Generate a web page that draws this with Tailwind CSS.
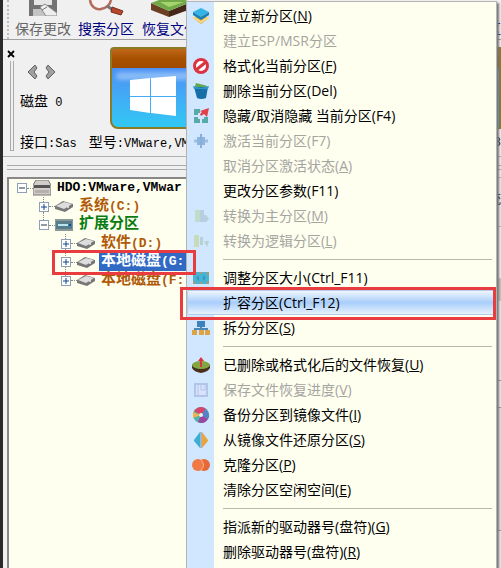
<!doctype html>
<html lang="zh-CN">
<head>
    <meta charset="UTF-8">
    <meta name="viewport" content="width=device-width, initial-scale=1">
    <title>分区管理</title>
    <script src="https://cdn.jsdelivr.net/npm/@tailwindcss/browser@4"></script>
</head>
<body class="bg-[#f0f0f0] overflow-hidden font-['Open_Sans','Noto_Sans_CJK_SC',sans-serif] text-black">
<div class="relative h-screen overflow-hidden border-l-3 border-[#2c2929] flex flex-col">

    <!-- toolbar -->
    <header class="h-10 shrink-0 flex border-b border-[#a0a0a0] pl-1 whitespace-nowrap text-[14px] leading-[18px] font-['Liberation_Sans','Noto_Sans_CJK_SC',sans-serif]">
        <div class="w-2 border-l-2 border-dotted border-[#bdbdbd]"></div>
        <button class="w-[56px] flex flex-col items-center text-[#666]">
            <svg class="w-7 h-4 mb-1 shrink-0" viewBox="0 0 28 16"><path d="M0 0h28v16H0z" fill="#737373"/><path d="M5 0h18v5H5z" fill="#e6e6e6"/><path d="M4 9h20v7H4z" fill="#c4c4c4"/><path d="M11 7l5-3 12 9v3H17z" fill="#eee" stroke="#888"/><path d="M13 10l5-3" stroke="#777"/></svg>
            保存更改
        </button>
        <button class="w-16 flex flex-col items-center pl-[6px] text-[#000080]">
            <svg class="w-9 h-4 mb-1 shrink-0" viewBox="0 0 36 16"><path d="M2 0c1 7 6 10 11 9s9-4 10-9" fill="#f7f3f2" stroke="#b36d5c" stroke-width="2.5"/><path d="M19 6l6 4" stroke="#777" stroke-width="3"/><path d="M24 7l11 4-2 4-10-3z" fill="#b9452b" stroke="#783020"/></svg>
            搜索分区
        </button>
        <button class="w-16 flex flex-col items-center pl-[6px] text-[#000080]">
            <svg class="w-12 h-[17px] mb-[3px] shrink-0" viewBox="0 0 48 17"><path d="M5 3l18 8v6L5 10z" fill="#6b3f23"/><path d="M23 11l22-9v7l-22 8z" fill="#45281a"/><path d="M5 3l8-3h26l6 2-22 9z" fill="#72a848"/><path d="M14 2h24l-15 5z" fill="#a4d36f"/></svg>
            恢复文件
        </button>
        <span class="ml-auto pt-5 text-[#000080]">区</span>
    </header>

    <!-- disk panel -->
    <section class="h-[117px] shrink-0 flex border-b border-[#b0b0b0] overflow-hidden whitespace-nowrap">
        <div class="w-[17px] shrink-0 pl-1 pt-[7px]">
            <button class="block h-[14px]" aria-label="关闭"><svg class="w-2 h-2" viewBox="0 0 8 8"><path d="M1 1l6 6M7 1L1 7" stroke="#000" stroke-width="1.8"/></svg></button>
            <div class="ml-[3px] w-1 h-[90px] border-x border-[#aaa] border-b"></div>
        </div>
        <div class="flex-1 min-w-0 font-['Liberation_Mono','Noto_Sans_CJK_SC',monospace] text-[12px]">
            <div class="flex h-[92px]">
                <div class="w-[90px] shrink-0">
                    <div class="flex gap-[7px] pt-6 pl-[7px]">
                        <button aria-label="上一个"><svg class="w-[11px] h-4" viewBox="0 0 11 16"><path d="M8 1L1 8l7 7 2-3-3-4 3-4z" fill="#a0a0a0" stroke="#606060"/></svg></button>
                        <button aria-label="下一个"><svg class="w-[11px] h-4" viewBox="0 0 11 16"><path d="M3 1l7 7-7 7-2-3 3-4-3-4z" fill="#a0a0a0" stroke="#606060"/></svg></button>
                    </div>
                    <p class="mt-3 leading-5"><span class="text-[14px]">磁盘</span> 0</p>
                </div>
                <div class="flex-1 mt-[7px] h-[82px] overflow-hidden border-2 border-[#8b7b28] rounded-tl-sm rounded-bl-lg bg-linear-to-b from-[#507cf4] to-[#30c8f4]">
                    <div class="h-[19px] bg-linear-to-b from-[#bf6818] via-[#a85000] to-[#a04b00]"></div>
                    <div class="ml-1 mt-1 h-2 rounded-full bg-white/35 blur-[2px]"></div>
                    <svg class="ml-4 -mt-1 w-[50px] h-10" viewBox="0 0 50 40"><path d="M2 4l20-2v18H2zM23 2l25-2v20H23zM2 21h20v16L2 34zM23 21h25v19l-25-3z" fill="#fff"/></svg>
                </div>
            </div>
            <div class="flex gap-3 pt-[1px] leading-5">
                <p><span class="text-[14px]">接口</span>:Sas</p>
                <p><span class="text-[14px]">型号</span>:VMware,VM</p>
                <p class="ml-auto">83</p>
            </div>
        </div>
    </section>
    <div class="h-5 shrink-0 flex flex-col justify-center gap-[3px] pl-1">
        <div class="h-px bg-[#aaa]"></div>
        <div class="h-px bg-[#aaa]"></div>
    </div>

    <!-- partition tree -->
    <main class="flex-1 flex min-h-0">
        <ul class="relative ml-1 flex-1 grid grid-rows-[repeat(3,18px_19px)] content-start items-center border-t-2 border-l-2 border-[#888] bg-[#fffff0] pl-2 font-bold text-[15px] leading-[18px] whitespace-nowrap font-['Liberation_Mono','Noto_Sans_CJK_SC',monospace]">
            <li class="flex items-center">
                <button class="size-[10px] border border-[#8fa0b5] bg-white shrink-0" aria-label="折叠"><svg viewBox="0 0 8 8"><path d="M1 4h6" stroke="#234"/></svg></button>
                <i class="w-[6px] border-t border-dotted border-[#888]"></i>
                <svg class="w-[18px] h-4 mr-[6px]" viewBox="0 0 18 16"><path d="M3 0h12l3 5v10H0V5z" fill="#d1cdca" stroke="#777"/><path d="M1 5h16v3H1z" fill="#555"/><path d="M2 10h14v3H2z" fill="#b5b0ac"/></svg>
                <span class="text-[13px]">HDO:VMware,VMwar</span>
            </li>
            <li class="relative flex items-center pl-[22px] text-[#b05a08]">
                <i class="absolute left-[26px] -top-px h-[5px] border-l border-dotted border-[#888]"></i>
                <i class="absolute left-[26px] top-[14px] h-[8px] border-l border-dotted border-[#888]"></i>
                <button class="size-[10px] border border-[#8fa0b5] bg-white shrink-0" aria-label="展开"><svg viewBox="0 0 8 8"><path d="M1 4h6M4 1v6" stroke="#148"/></svg></button>
                <i class="w-[6px] border-t border-dotted border-[#888]"></i>
                <svg class="w-[18px] h-[11px] mr-[6px]" viewBox="0 0 18 11"><path d="M0 5l8-5 10 3v3l-8 5-10-3z" fill="#777"/><path d="M1 5l8-4 8 2-8 5z" fill="#ddd"/><circle cx="13" cy="6" r="1" fill="#eee"/></svg>
                <span>系统<span class="text-[13px]">(C:)</span></span>
            </li>
            <li class="flex items-center pl-[22px] text-[#087c10]">
                <button class="size-[10px] border border-[#8fa0b5] bg-white shrink-0" aria-label="折叠"><svg viewBox="0 0 8 8"><path d="M1 4h6" stroke="#234"/></svg></button>
                <i class="w-[6px] border-t border-dotted border-[#888]"></i>
                <svg class="w-[18px] h-3 mr-[6px]" viewBox="0 0 18 12"><path d="M0 0h18v12H0z" fill="#8b9898"/><path d="M1 2h16v8H1z" fill="#577c8b"/><path d="M3 6h10" stroke="#b9e5f0" stroke-width="2"/><path d="M14 5h2v2h-2z" fill="#0055a0"/></svg>
                <span>扩展分区</span>
            </li>
            <li class="relative flex items-center pl-11 text-[#b05a08]">
                <i class="absolute left-12 -top-px h-[5px] border-l border-dotted border-[#888]"></i>
                <i class="absolute left-12 top-[14px] h-[9px] border-l border-dotted border-[#888]"></i>
                <button class="size-[10px] border border-[#8fa0b5] bg-white shrink-0" aria-label="展开"><svg viewBox="0 0 8 8"><path d="M1 4h6M4 1v6" stroke="#148"/></svg></button>
                <i class="w-[6px] border-t border-dotted border-[#888]"></i>
                <svg class="w-[18px] h-[11px] mr-[6px]" viewBox="0 0 18 11"><path d="M0 5l8-5 10 3v3l-8 5-10-3z" fill="#777"/><path d="M1 5l8-4 8 2-8 5z" fill="#ddd"/><circle cx="13" cy="6" r="1" fill="#eee"/></svg>
                <span>软件<span class="text-[13px]">(D:)</span></span>
            </li>
            <li class="relative flex items-center pl-11 text-white">
                <i class="absolute left-12 top-[14px] h-[9px] border-l border-dotted border-[#888]"></i>
                <button class="size-[10px] border border-[#8fa0b5] bg-white shrink-0" aria-label="展开"><svg viewBox="0 0 8 8"><path d="M1 4h6M4 1v6" stroke="#148"/></svg></button>
                <i class="w-[6px] border-t border-dotted border-[#888]"></i>
                <svg class="w-[18px] h-[11px] mr-1" viewBox="0 0 18 11"><path d="M0 5l8-5 10 3v3l-8 5-10-3z" fill="#777"/><path d="M1 5l8-4 8 2-8 5z" fill="#ddd"/><circle cx="13" cy="6" r="1" fill="#eee"/></svg>
                <span class="flex-1 bg-[#316ac5] pl-[2px]">本地磁盘<span class="text-[13px]">(G:</span></span>
            </li>
            <li class="flex items-center pl-11 text-[#b05a08]">
                <button class="size-[10px] border border-[#8fa0b5] bg-white shrink-0" aria-label="展开"><svg viewBox="0 0 8 8"><path d="M1 4h6M4 1v6" stroke="#148"/></svg></button>
                <i class="w-[6px] border-t border-dotted border-[#888]"></i>
                <svg class="w-[18px] h-[11px] mr-[6px]" viewBox="0 0 18 11"><path d="M0 5l8-5 10 3v3l-8 5-10-3z" fill="#777"/><path d="M1 5l8-4 8 2-8 5z" fill="#ddd"/><circle cx="13" cy="6" r="1" fill="#eee"/></svg>
                <span>本地磁盘<span class="text-[13px]">(F:</span></span>
            </li>
        </ul>
        <!-- volume details, mostly under the menu -->
        <div class="w-[30px] flex flex-col bg-[#ececec] text-right text-[13px]">
            <div class="h-[50px] pt-[11px] border-y border-[#bbb]">统</div>
            <div class="h-[52px] border-b border-[#ccc] bg-[#f0f0f0]"></div>
            <div class="h-[22px] bg-[#c9c5b9]"></div>
            <div class="h-20 border-b border-[#999]"></div>
            <div class="h-[27px] border-b border-[#999]"></div>
            <div class="h-[123px] border-b border-[#999] bg-[#e2e2e2]"></div>
        </div>
    </main>

    <!-- context menu -->
    <nav class="absolute left-[183px] right-1 top-px -bottom-1 pt-px pl-px border border-[#b4b4b4] bg-linear-to-r from-[#d1e6ff] from-[27px] to-[#fffff0] to-[27px] shadow-[2px_2px_2px_#777] text-[14px] leading-[25px] whitespace-nowrap [&>button]:flex [&>button]:w-full [&>button]:h-[25px] [&>button]:items-center [&>button]:pl-[35px] [&>button>svg]:absolute [&>button>svg]:left-[5px] [&>button>svg]:size-[18px] [&>button:disabled]:text-[#a5a5a0] [&>hr]:h-px [&>hr]:ml-[35px] [&>hr]:mr-1 [&>hr]:mt-[6px] [&>hr]:mb-[5px] [&>hr]:border-[#b8b8ae]">
        <button><svg viewBox="0 0 18 18"><path d="M1 11l8 6 8-6-8-4z" fill="#e0ae44"/><path d="M1 9l8 5 8-5v2l-8 5-8-5z" fill="#f9df88"/><path d="M1 5l8-4 8 4-8 5z" fill="#35b4e5"/><path d="M1 5l8 5 8-5v3l-8 5-8-5z" fill="#1680bb"/></svg>建立新分区(<u>N</u>)</button>
        <button disabled>建立ESP/MSR分区</button>
        <button><svg viewBox="0 0 18 18"><circle cx="9" cy="9" r="6.500" fill="#fff" stroke="#db3440" stroke-width="3"/><path d="M4 13L14 5" stroke="#db3440" stroke-width="3"/></svg>格式化当前分区(<u>F</u>)</button>
        <button><svg viewBox="0 0 18 18"><path d="M3 4l1-3 4 1 4 1 3 1v2H3z" fill="#62a853"/><path d="M2 5h14l-2 11q-5 2-9 0z" fill="#176fa8"/><path d="M1 4l8 2 8-2-1 3H2z" fill="#2c96cb"/></svg>删除当前分区(Del)</button>
        <button><svg viewBox="0 0 18 18"><path d="M8 4H4v4M4 10v4h4M10 14h4v-4" fill="none" stroke="#58aaa9" stroke-width="4"/><path d="M17 1l-2 9-3-3-3 2-1-2 2-2-2-1z" fill="#e3404a"/></svg>隐藏/取消隐藏 当前分区(F4)</button>
        <button disabled><svg viewBox="0 0 18 18"><path d="M2 9h14" stroke="#9cbfe2" stroke-width="3"/><path d="M5 5h8v8H5z" fill="#8eb5dc"/><path d="M9 2v14" stroke="#86b0da" stroke-width="2"/></svg>激活当前分区(F7)</button>
        <button disabled>取消分区激活状态(<u>A</u>)</button>
        <button>更改分区参数(F11)</button>
        <button disabled><svg viewBox="0 0 18 18"><path d="M3 3h5v12H3z" fill="#c2dccb"/><path d="M8 3h4v5h2l3 4-3 3H8z" fill="#b7cee0"/></svg>转换为主分区(<u>M</u>)</button>
        <button disabled><svg viewBox="0 0 18 18"><path d="M2 3h5v12H2z" fill="#c7dbbc"/><path d="M8 5h3v8H8zM12 9h5l-2 6z" fill="#b5d1d5"/></svg>转换为逻辑分区(<u>L</u>)</button>
        <hr>
        <button><svg viewBox="0 0 18 18"><path d="M1 3h16v12H1z" fill="#46b4d2"/><path d="M1 3h2v3H1zM15 3h2v3h-2zM1 12h2v3H1zM15 12h2v3h-2zM8 3h2v2H8zM8 13h2v2H8z" fill="#b29770"/><path d="M4 9l3-3v6zM14 9l-3-3v6z" fill="#3498c0"/></svg>调整分区大小(Ctrl_F11)</button>
        <button class="rounded-xs border border-[#b6cceb] -ml-px pl-[35px]! bg-linear-to-b from-[#f0f6fc] via-[#a9cefb] to-[#e6f1fc]">扩容分区(Ctrl_F12)</button>
        <button><svg viewBox="0 0 18 18"><path d="M9 7v3M3 12v-2h12v2" stroke="#4b88b7" stroke-width="2" fill="none"/><path d="M5 2h8v6H5z" fill="#3d82bd"/><path d="M0 11h5v5H0zM7 11h5v5H7zM13 11h5v5h-5z" fill="#dba446"/></svg>拆分分区(<u>S</u>)</button>
        <hr>
        <button><svg viewBox="0 0 18 18"><path d="M0 9q9-6 18 0v3q-2 4-9 5-7-1-9-5z" fill="#49301d"/><ellipse cx="9" cy="9" rx="9" ry="4" fill="#82a642"/><path d="M8 11V5H6l3-4 3 4h-2v6z" fill="#dc3541"/></svg>已删除或格式化后的文件恢复(<u>U</u>)</button>
        <button disabled><svg viewBox="0 0 18 18"><path d="M3 3h12v12H3z" fill="#d8e3fb" stroke="#b3c4ea" stroke-width="2"/><path d="M6 3v12M9 4v5h4V4" fill="none" stroke="#b3c4ea"/></svg>保存文件恢复进度(<u>V</u>)</button>
        <button><svg viewBox="0 0 18 18"><circle cx="9" cy="9" r="8" fill="#50b5a5"/><path d="M9 9L2 5Q8-2 14 3z" fill="#d84569"/><path d="M9 9l5-6q5 6 2 10z" fill="#5382c6"/><path d="M9 9l7 4q-4 6-10 3z" fill="#9c45a3"/><path d="M9 9L1 6v6z" fill="#edb44d"/><circle cx="9" cy="9" r="2" fill="#eee"/></svg>备份分区到镜像文件(<u>I</u>)</button>
        <button><svg viewBox="0 0 18 18"><path d="M8 1v16l-6-7V9z" fill="#3cafd0"/><path d="M10 1v16l6-7V9z" fill="#e6a53f"/><path d="M9 1v16" stroke="#698a95"/></svg>从镜像文件还原分区(<u>S</u>)</button>
        <button><svg viewBox="0 0 18 18"><circle cx="12" cy="9" r="6" fill="#e56a38"/><circle cx="6" cy="9" r="6" fill="#f17943"/><path d="M9 4q5 5 0 10" fill="none" stroke="#ffb18a"/></svg>克隆分区(<u>P</u>)</button>
        <button>清除分区空闲空间(<u>E</u>)</button>
        <hr>
        <button>指派新的驱动器号(盘符)(<u>G</u>)</button>
        <button>删除驱动器号(盘符)(<u>R</u>)</button>
    </nav>

    <!-- callout frames -->
    <div class="absolute left-[49px] top-[250px] w-[144px] h-[25px] border-3 border-[#e83c40]"></div>
    <div class="absolute left-[177px] right-[5px] top-[287px] h-[33px] border-3 border-[#e83c40]"></div>
</div>
</body>
</html>
